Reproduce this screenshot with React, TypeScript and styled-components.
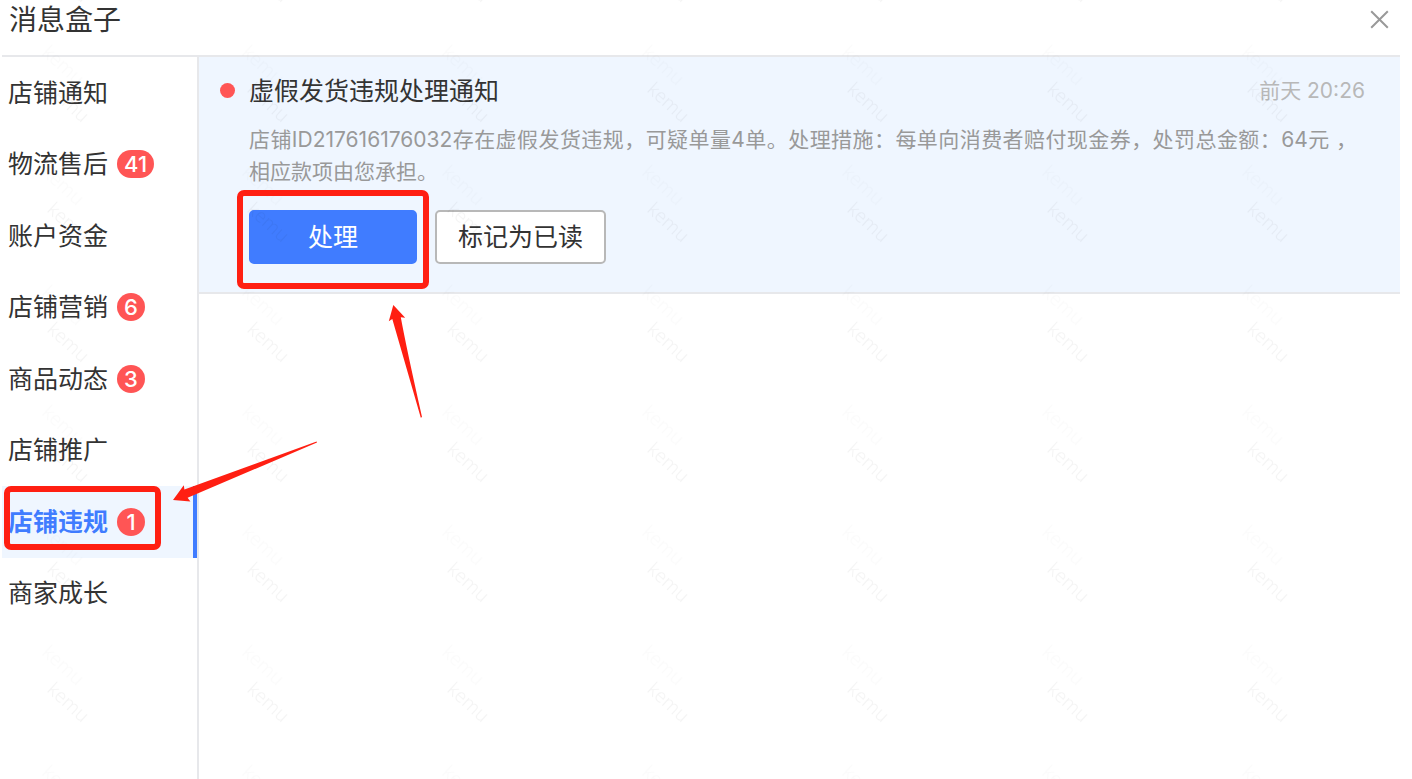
import React from "react";
import styled, { createGlobalStyle } from "styled-components";

const color = {
  ink: "#333333",
  muted: "#999999",
  faint: "#b8b8b8",
  line: "#e7e8eb",
  tint: "#eff6ff",
  blue: "#407cff",
  badge: "#ff5555",
  mark: "#ff1f12",
};

const GlobalStyle = createGlobalStyle`
  *, *::before, *::after { box-sizing: border-box; }
  html, body, #root { height: 100%; }
  body {
    margin: 0;
    background: #ffffff;
    color: ${color.ink};
    font-family: Inter, "Noto Sans CJK SC", sans-serif;
  }
  button { font-family: inherit; cursor: pointer; }
`;

const Page = styled.div`
  position: relative;
  display: flex;
  flex-direction: column;
  min-height: 100%;
  padding: 0 12px 0 2px;
  overflow: hidden;
`;

const Header = styled.header`
  display: flex;
  align-items: center;
  justify-content: space-between;
  height: 57px;
  padding: 0 11px 16px 7px;
  border-bottom: 2px solid ${color.line};
`;

const Heading = styled.h1`
  margin: 0;
  font-size: 28px;
  line-height: 40px;
  font-weight: 400;
`;

const CloseButton = styled.button`
  display: flex;
  padding: 0;
  border: 0;
  background: none;
  color: ${color.muted};
`;

const Body = styled.div`
  display: flex;
  flex: 1;
`;

const Sidebar = styled.nav`
  flex: none;
  width: 197px;
  border-right: 2px solid ${color.line};
`;

const NavList = styled.ul`
  display: grid;
  grid-auto-rows: 1fr;
  min-height: 572px;
  margin: 0;
  padding: 0;
  list-style: none;
`;

const NavLink = styled.a<{ $active: boolean }>`
  position: relative;
  display: flex;
  align-items: center;
  gap: 9px;
  height: 100%;
  padding-left: 6px;
  border-right: 4px solid ${(p) => (p.$active ? color.blue : "transparent")};
  background: ${(p) => (p.$active ? color.tint : "transparent")};
  color: ${(p) => (p.$active ? color.blue : color.ink)};
  font-size: 25px;
  line-height: 36px;
  font-weight: ${(p) => (p.$active ? 700 : 400)};
  text-decoration: none;
`;

const Badge = styled.span`
  min-width: 28px;
  padding: 0 7px;
  border-radius: 14px;
  background: ${color.badge};
  color: #ffffff;
  font-size: 22px;
  line-height: 28px;
  font-weight: 500;
  text-align: center;
`;

const Main = styled.main`
  flex: 1;
  min-width: 0;
`;

const Notice = styled.article`
  display: grid;
  grid-template-columns: 14px 1fr;
  column-gap: 15px;
  padding: 14px 35px 28px 21px;
  border-bottom: 2px solid ${color.line};
  background: ${color.tint};
`;

const UnreadDot = styled.span`
  width: 15px;
  height: 15px;
  margin-top: 12px;
  border-radius: 50%;
  background: ${color.badge};
`;

const NoticeHead = styled.div`
  display: flex;
  align-items: center;
  justify-content: space-between;
  height: 40px;
`;

const NoticeTitle = styled.h2`
  margin: 0;
  font-size: 25px;
  line-height: 40px;
  font-weight: 400;
`;

const Time = styled.time`
  color: ${color.faint};
  font-size: 21px;
  line-height: 32px;
`;

const NoticeText = styled.p`
  margin: 13px 0 22px;
  padding-right: 8px;
  color: ${color.muted};
  font-size: 21px;
  line-height: 32px;
  text-align: justify;
`;

const Actions = styled.div`
  display: flex;
  gap: 18px;
`;

const ActionButton = styled.button<{ $primary?: boolean }>`
  position: relative;
  height: 54px;
  padding: 0 ${(p) => (p.$primary ? 57 : 21)}px;
  border: 2px solid ${(p) => (p.$primary ? color.blue : color.faint)};
  border-radius: 5px;
  background: ${(p) => (p.$primary ? color.blue : "#ffffff")};
  color: ${(p) => (p.$primary ? "#ffffff" : color.ink)};
  font-size: 25px;
  line-height: 36px;
`;

const Outline = styled.span<{ $inset: string }>`
  position: absolute;
  inset: ${(p) => p.$inset};
  z-index: 2;
  border: 6px solid ${color.mark};
  border-radius: 7px;
  pointer-events: none;
`;

const Overlay = styled.svg<{ $layer: number }>`
  position: absolute;
  inset: 0;
  z-index: ${(p) => p.$layer};
  width: 100%;
  height: 100%;
  pointer-events: none;
`;

const WatermarkText = styled.text`
  font-family: "Noto Sans", sans-serif;
  font-size: 19px;
  font-weight: 300;
`;

const items = [
  { label: "店铺通知" },
  { label: "物流售后", count: 41 },
  { label: "账户资金" },
  { label: "店铺营销", count: 6 },
  { label: "商品动态", count: 3 },
  { label: "店铺推广" },
  { label: "店铺违规", count: 1, active: true },
  { label: "商家成长" },
];

function Watermark() {
  return (
    <Overlay $layer={1} aria-hidden="true">
      <defs>
        <pattern id="watermark" x="30" y="38" width="200" height="120" patternUnits="userSpaceOnUse">
          <WatermarkText transform="translate(11 16) rotate(42)" fillOpacity="0.015">kemu</WatermarkText>
          <WatermarkText transform="translate(16 53) rotate(42)" fillOpacity="0.045">kemu</WatermarkText>
        </pattern>
      </defs>
      <rect width="100%" height="100%" fill="url(#watermark)" />
    </Overlay>
  );
}

function Arrows() {
  return (
    <Overlay $layer={3} aria-hidden="true" fill={color.mark}>
      <path d="M393.3 305 L405.2 317.7 L400.8 317.2 Q406 346 422 417 L420.8 417.8 L392.3 319 L388.8 321.3 Z" />
      <path d="M173 500 L183.8 485.2 L184.4 489.4 L316.6 441.5 L317 442.6 L187.6 497.8 L190.4 501.5 Z" />
    </Overlay>
  );
}

export default function App() {
  return (
    <>
      <GlobalStyle />
      <Page>
        <Header>
          <Heading>消息盒子</Heading>
          <CloseButton type="button" aria-label="关闭">
            <svg width="19" height="19" viewBox="0 0 19 19" fill="none" stroke="currentColor" strokeWidth="2">
              <path d="M1.2 1.2 L17.8 17.8 M17.8 1.2 L1.2 17.8" />
            </svg>
          </CloseButton>
        </Header>
        <Body>
          <Sidebar>
            <NavList>
              {items.map((item) => (
                <li key={item.label}>
                  <NavLink href="#" $active={!!item.active} aria-current={item.active ? "page" : undefined}>
                    {item.label}
                    {item.count && <Badge>{item.count}</Badge>}
                    {item.active && <Outline $inset="0 32px 8px 2px" />}
                  </NavLink>
                </li>
              ))}
            </NavList>
          </Sidebar>
          <Main>
            <Notice>
              <UnreadDot />
              <div>
                <NoticeHead>
                  <NoticeTitle>虚假发货违规处理通知</NoticeTitle>
                  <Time>前天 20:26</Time>
                </NoticeHead>
                <NoticeText>
                  店铺ID217616176032存在虚假发货违规，可疑单量4单。处理措施：每单向消费者赔付现金券，处罚总金额：64元 ，相应款项由您承担。
                </NoticeText>
                <Actions>
                  <ActionButton type="button" $primary>
                    处理
                    <Outline $inset="-22px -14px -27px -14px" />
                  </ActionButton>
                  <ActionButton type="button">标记为已读</ActionButton>
                </Actions>
              </div>
            </Notice>
          </Main>
        </Body>
        <Watermark />
        <Arrows />
      </Page>
    </>
  );
}
